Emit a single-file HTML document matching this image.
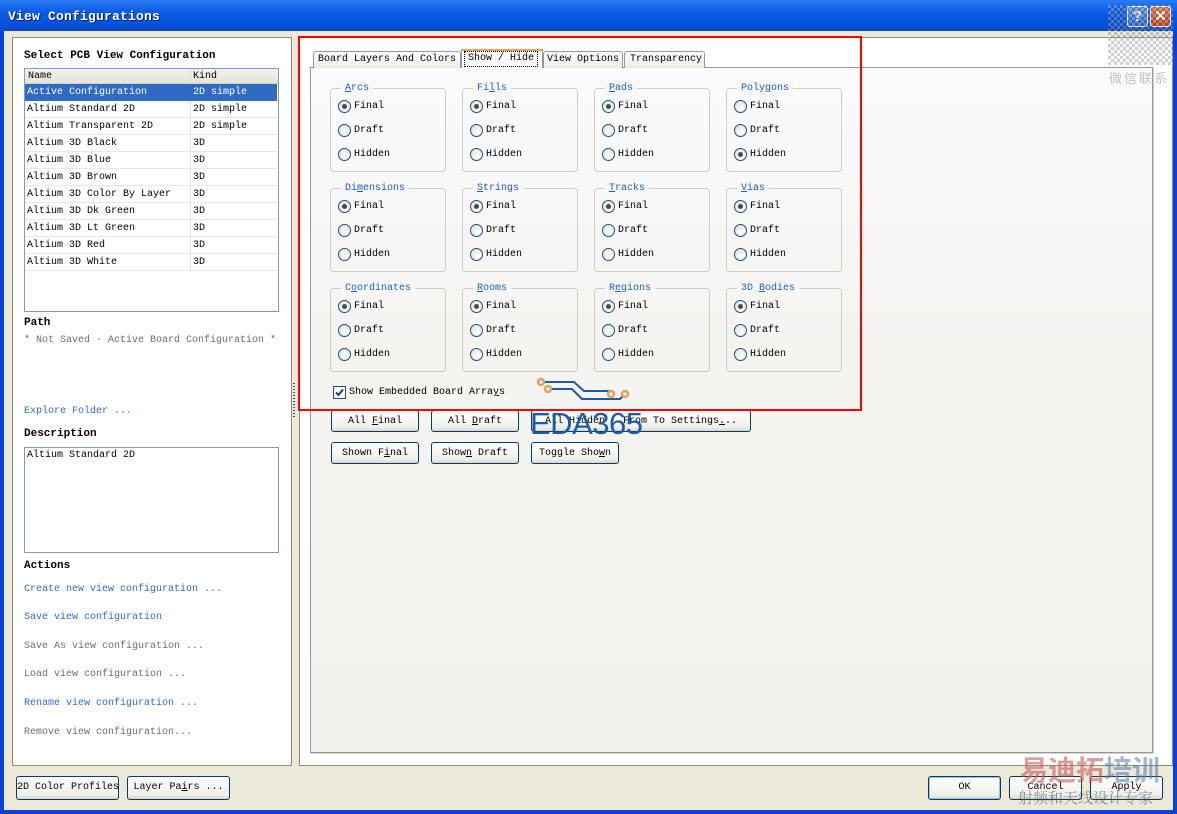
<!DOCTYPE html>
<html><head><meta charset="utf-8"><style>
*{margin:0;padding:0;box-sizing:border-box}
body{width:1177px;height:814px;overflow:hidden;background:#0842d8;font-family:"Liberation Mono","Noto Sans CJK SC",monospace;font-size:10px;color:#000;position:relative}
.a{position:absolute}
#title{left:0;top:0;width:1177px;height:31px;background:linear-gradient(#2a7cf4,#0a5ae6 40%,#0552dc 80%,#0a46c4);}
#title span{position:absolute;left:8px;top:9px;color:#fff;font-weight:bold;font-size:13px;letter-spacing:0.2px;text-shadow:1px 1px 0 #0a246a}
#client{left:4px;top:31px;width:1169px;height:779px;background:#ece9d8}
.wp{background:#fff;border:1px solid #8e8a7e}
.t{white-space:nowrap;position:absolute;line-height:14px}
.b{font-weight:bold;font-size:11px}
.blue{color:#2f6cc8}
.gray{color:#6d6d6d}
.row{position:absolute;left:0;width:252px;height:17px;border-bottom:1px solid #e8e8e8}
.row span{position:absolute;top:3px;white-space:nowrap;line-height:12px}
.grp{position:absolute;width:116px;height:84px;border:1px solid #d0cfc2;border-radius:4px}
.grp .lbl{position:absolute;left:10px;top:-7px;background:#f7f7f7;padding:0 4px;color:#1f5fc4;line-height:14px;white-space:nowrap}
.rd{position:absolute;left:7px;width:13px;height:13px;border:1px solid #1c5180;border-radius:50%;background:radial-gradient(circle at 60% 60%,#fff,#dcdcd6)}
.rd.on::after{content:"";position:absolute;left:3px;top:3px;width:5px;height:5px;border-radius:50%;background:#4a4a4a}
.rt{position:absolute;left:23px;white-space:nowrap;line-height:14px}
.btn{position:absolute;height:22px;border:1px solid #003c74;border-radius:3px;background:linear-gradient(#fff,#f0f0ea 80%,#d8d6cc);text-align:center;line-height:22px;white-space:nowrap}
u{text-decoration:underline}
</style></head><body>
<div id="title" class="a"><span>View Configurations</span></div>
<div class="a" style="left:1127px;top:6px;width:21px;height:21px;border:1px solid #fff;border-radius:3px;background:linear-gradient(#5c93f0,#2b63d6);color:#fff;font:bold 15px 'Liberation Sans',sans-serif;text-align:center;line-height:19px">?</div>
<div class="a" style="left:1150px;top:6px;width:21px;height:21px;border:1px solid #fff;border-radius:3px;background:linear-gradient(#e4784c,#c6421a);color:#fff;font:bold 15px 'Liberation Sans',sans-serif;text-align:center;line-height:19px">✕</div>
<div id="client" class="a"></div>

<div class="a wp" style="left:12px;top:37px;width:280px;height:729px"></div>
<div class="t b" style="left:24px;top:49px">Select PCB View Configuration</div>
<div class="a" style="left:24px;top:68px;width:255px;height:244px;border:1px solid #7a9cd3;background:#fff;overflow:hidden">
 <div class="a" style="left:0;top:0;width:253px;height:15px;background:linear-gradient(#f4f3ee,#e6e3d6);border-bottom:1px solid #d6d2c2"></div>
 <div class="a" style="left:165px;top:0;width:1px;height:203px;background:#e2e2e2"></div>
 <span class="t" style="left:3px;top:1px">Name</span><span class="t" style="left:168px;top:1px">Kind</span>
 <div class="row" style="top:15px;background:#316ac5;color:#fff;border:none"><span style="left:2px">Active Configuration</span><span style="left:168px">2D simple</span></div>
 <div class="row" style="top:32px"><span style="left:2px">Altium Standard 2D</span><span style="left:168px">2D simple</span></div>
 <div class="row" style="top:49px"><span style="left:2px">Altium Transparent 2D</span><span style="left:168px">2D simple</span></div>
 <div class="row" style="top:66px"><span style="left:2px">Altium 3D Black</span><span style="left:168px">3D</span></div>
 <div class="row" style="top:83px"><span style="left:2px">Altium 3D Blue</span><span style="left:168px">3D</span></div>
 <div class="row" style="top:100px"><span style="left:2px">Altium 3D Brown</span><span style="left:168px">3D</span></div>
 <div class="row" style="top:117px"><span style="left:2px">Altium 3D Color By Layer</span><span style="left:168px">3D</span></div>
 <div class="row" style="top:134px"><span style="left:2px">Altium 3D Dk Green</span><span style="left:168px">3D</span></div>
 <div class="row" style="top:151px"><span style="left:2px">Altium 3D Lt Green</span><span style="left:168px">3D</span></div>
 <div class="row" style="top:168px"><span style="left:2px">Altium 3D Red</span><span style="left:168px">3D</span></div>
 <div class="row" style="top:185px"><span style="left:2px">Altium 3D White</span><span style="left:168px">3D</span></div>
</div>
<div class="t b" style="left:24px;top:316px">Path</div>
<div class="t gray" style="left:24px;top:334px">* Not Saved - Active Board Configuration *</div>
<div class="t blue" style="left:24px;top:405px">Explore Folder ...</div>
<div class="t b" style="left:24px;top:427px">Description</div>
<div class="a" style="left:24px;top:447px;width:255px;height:106px;border:1px solid #7f9db9;background:#fff"></div>
<div class="t" style="left:27px;top:449px">Altium Standard 2D</div>
<div class="t b" style="left:24px;top:559px">Actions</div>
<div class="t blue" style="left:24px;top:583px">Create new view configuration ...</div>
<div class="t blue" style="left:24px;top:611px">Save view configuration</div>
<div class="t gray" style="left:24px;top:640px">Save As view configuration ...</div>
<div class="t gray" style="left:24px;top:668px">Load view configuration ...</div>
<div class="t blue" style="left:24px;top:697px">Rename view configuration ...</div>
<div class="t gray" style="left:24px;top:726px">Remove view configuration...</div>
<div class="btn" style="left:16px;top:776px;width:103px;height:24px;line-height:22px">2D Color Profiles</div>
<div class="btn" style="left:127px;top:776px;width:103px;height:24px;line-height:22px">Layer Pa<u>i</u>rs ...</div>

<div class="a" style="left:293px;top:383px;width:2px;height:34px;background:repeating-linear-gradient(#2a4e88 0 1px,transparent 1px 3px)"></div>

<div class="a wp" style="left:299px;top:37px;width:874px;height:729px"></div>
<div class="a" style="left:310px;top:67px;width:843px;height:686px;border:1px solid #919b9c;background:linear-gradient(#fafafc,#f5f4f1 40%,#f2f1ec);box-shadow:1px 1px 0 #d8d5c8"></div>
<div class="a" style="left:313px;top:51px;width:148px;height:17px;border:1px solid #919b9c;border-bottom:none;background:linear-gradient(#fff,#ecebe5);border-radius:3px 3px 0 0"><span class="t" style="left:4px;top:1px">Board Layers And Colors</span></div>
<div class="a" style="left:461px;top:49px;width:82px;height:19px;border:1px solid #919b9c;border-top:2px solid #e9a450;border-bottom:none;background:#fcfcfe"><span class="t" style="left:2px;top:0px;border:1px dotted #000;padding:0 3px">Show / Hide</span></div>
<div class="a" style="left:543px;top:51px;width:80px;height:17px;border:1px solid #919b9c;border-bottom:none;background:linear-gradient(#fff,#ecebe5);border-radius:3px 3px 0 0"><span class="t" style="left:3px;top:1px">View Options</span></div>
<div class="a" style="left:624px;top:51px;width:81px;height:17px;border:1px solid #919b9c;border-bottom:none;background:linear-gradient(#fff,#ecebe5);border-radius:3px 3px 0 0"><span class="t" style="left:5px;top:1px">Transparency</span></div>

<div class="grp" style="left:330px;top:88px"><span class="lbl"><u>A</u>rcs</span><div class="rd on" style="top:11px"></div><span class="rt" style="top:11px">Final</span><div class="rd" style="top:35px"></div><span class="rt" style="top:35px">Draft</span><div class="rd" style="top:59px"></div><span class="rt" style="top:59px">Hidden</span></div>
<div class="grp" style="left:462px;top:88px"><span class="lbl">Fi<u>l</u>ls</span><div class="rd on" style="top:11px"></div><span class="rt" style="top:11px">Final</span><div class="rd" style="top:35px"></div><span class="rt" style="top:35px">Draft</span><div class="rd" style="top:59px"></div><span class="rt" style="top:59px">Hidden</span></div>
<div class="grp" style="left:594px;top:88px"><span class="lbl"><u>P</u>ads</span><div class="rd on" style="top:11px"></div><span class="rt" style="top:11px">Final</span><div class="rd" style="top:35px"></div><span class="rt" style="top:35px">Draft</span><div class="rd" style="top:59px"></div><span class="rt" style="top:59px">Hidden</span></div>
<div class="grp" style="left:726px;top:88px"><span class="lbl">Poly<u>g</u>ons</span><div class="rd" style="top:11px"></div><span class="rt" style="top:11px">Final</span><div class="rd" style="top:35px"></div><span class="rt" style="top:35px">Draft</span><div class="rd on" style="top:59px"></div><span class="rt" style="top:59px">Hidden</span></div>
<div class="grp" style="left:330px;top:188px"><span class="lbl">Di<u>m</u>ensions</span><div class="rd on" style="top:11px"></div><span class="rt" style="top:11px">Final</span><div class="rd" style="top:35px"></div><span class="rt" style="top:35px">Draft</span><div class="rd" style="top:59px"></div><span class="rt" style="top:59px">Hidden</span></div>
<div class="grp" style="left:462px;top:188px"><span class="lbl"><u>S</u>trings</span><div class="rd on" style="top:11px"></div><span class="rt" style="top:11px">Final</span><div class="rd" style="top:35px"></div><span class="rt" style="top:35px">Draft</span><div class="rd" style="top:59px"></div><span class="rt" style="top:59px">Hidden</span></div>
<div class="grp" style="left:594px;top:188px"><span class="lbl"><u>T</u>racks</span><div class="rd on" style="top:11px"></div><span class="rt" style="top:11px">Final</span><div class="rd" style="top:35px"></div><span class="rt" style="top:35px">Draft</span><div class="rd" style="top:59px"></div><span class="rt" style="top:59px">Hidden</span></div>
<div class="grp" style="left:726px;top:188px"><span class="lbl"><u>V</u>ias</span><div class="rd on" style="top:11px"></div><span class="rt" style="top:11px">Final</span><div class="rd" style="top:35px"></div><span class="rt" style="top:35px">Draft</span><div class="rd" style="top:59px"></div><span class="rt" style="top:59px">Hidden</span></div>
<div class="grp" style="left:330px;top:288px"><span class="lbl">C<u>o</u>ordinates</span><div class="rd on" style="top:11px"></div><span class="rt" style="top:11px">Final</span><div class="rd" style="top:35px"></div><span class="rt" style="top:35px">Draft</span><div class="rd" style="top:59px"></div><span class="rt" style="top:59px">Hidden</span></div>
<div class="grp" style="left:462px;top:288px"><span class="lbl"><u>R</u>ooms</span><div class="rd on" style="top:11px"></div><span class="rt" style="top:11px">Final</span><div class="rd" style="top:35px"></div><span class="rt" style="top:35px">Draft</span><div class="rd" style="top:59px"></div><span class="rt" style="top:59px">Hidden</span></div>
<div class="grp" style="left:594px;top:288px"><span class="lbl">R<u>e</u>gions</span><div class="rd on" style="top:11px"></div><span class="rt" style="top:11px">Final</span><div class="rd" style="top:35px"></div><span class="rt" style="top:35px">Draft</span><div class="rd" style="top:59px"></div><span class="rt" style="top:59px">Hidden</span></div>
<div class="grp" style="left:726px;top:288px"><span class="lbl">3D <u>B</u>odies</span><div class="rd on" style="top:11px"></div><span class="rt" style="top:11px">Final</span><div class="rd" style="top:35px"></div><span class="rt" style="top:35px">Draft</span><div class="rd" style="top:59px"></div><span class="rt" style="top:59px">Hidden</span></div>

<div class="a" style="left:333px;top:386px;width:13px;height:13px;border:1px solid #1c5180;background:#fff"><svg width="11" height="11" style="position:absolute;left:0;top:0"><path d="M2 5.5 L4.5 8 L9 2.5" stroke="#1c3f7a" stroke-width="2" fill="none"/></svg></div>
<div class="t" style="left:349px;top:386px">Show Embedded Board Arra<u>y</u>s</div>

<div class="btn" style="left:331px;top:410px;width:88px">All <u>F</u>inal</div>
<div class="btn" style="left:431px;top:410px;width:88px">All <u>D</u>raft</div>
<div class="btn" style="left:531px;top:410px;width:220px">All Hidden &nbsp; From To Settings<u>.</u>..</div>
<div class="btn" style="left:331px;top:442px;width:88px">Shown F<u>i</u>nal</div>
<div class="btn" style="left:431px;top:442px;width:88px">Show<u>n</u> Draft</div>
<div class="btn" style="left:531px;top:442px;width:88px">Toggle Sho<u>w</u>n</div>

<svg class="a" style="left:534px;top:376px" width="100" height="30"><path d="M8 6 L40 6 L50 15 L76 15 M13 13 L38 13 L48 23 L86 23 L91 18" stroke="#1d5ba6" stroke-width="2" fill="none"/><g fill="#f4ecdc" stroke="#dba366" stroke-width="2.5"><circle cx="7" cy="6" r="3"/><circle cx="14" cy="13" r="3"/><circle cx="77" cy="18" r="3"/><circle cx="91" cy="18" r="3"/></g></svg>
<div class="t" style="left:530px;top:408px;font:31px 'Liberation Sans',sans-serif;color:#1d5ba6;line-height:32px;letter-spacing:-0.5px">EDA365</div>

<div class="a" style="left:298px;top:36px;width:564px;height:375px;border:2px solid #f00"></div>

<div class="btn" style="left:928px;top:776px;width:73px;height:24px;line-height:22px;box-shadow:inset 0 0 0 1px #9dc0f4">OK</div>
<div class="btn" style="left:1009px;top:776px;width:73px;height:24px;line-height:22px">Cancel</div>
<div class="btn" style="left:1090px;top:776px;width:73px;height:24px;line-height:22px">Apply</div>

<div class="a" style="left:1108px;top:5px;width:65px;height:60px;opacity:0.25;background:repeating-conic-gradient(#444 0 25%,#eee 0 50%) 0 0/6px 6px"></div>
<div class="t" style="left:1109px;top:68px;font:13px 'Noto Sans CJK SC',sans-serif;color:#c4c4c4;letter-spacing:2px">微信联系</div>
<div class="t" style="left:1020px;top:752px;font:bold 28px 'Noto Sans CJK SC',sans-serif;line-height:34px;color:rgba(200,90,90,0.6)">易迪拓<span style="color:rgba(90,120,170,0.55)">培训</span></div>
<div class="t" style="left:1018px;top:789px;font:15px 'Noto Serif CJK SC',serif;color:rgba(80,80,80,0.6);line-height:18px">射频和天线设计专家</div>
</body></html>
